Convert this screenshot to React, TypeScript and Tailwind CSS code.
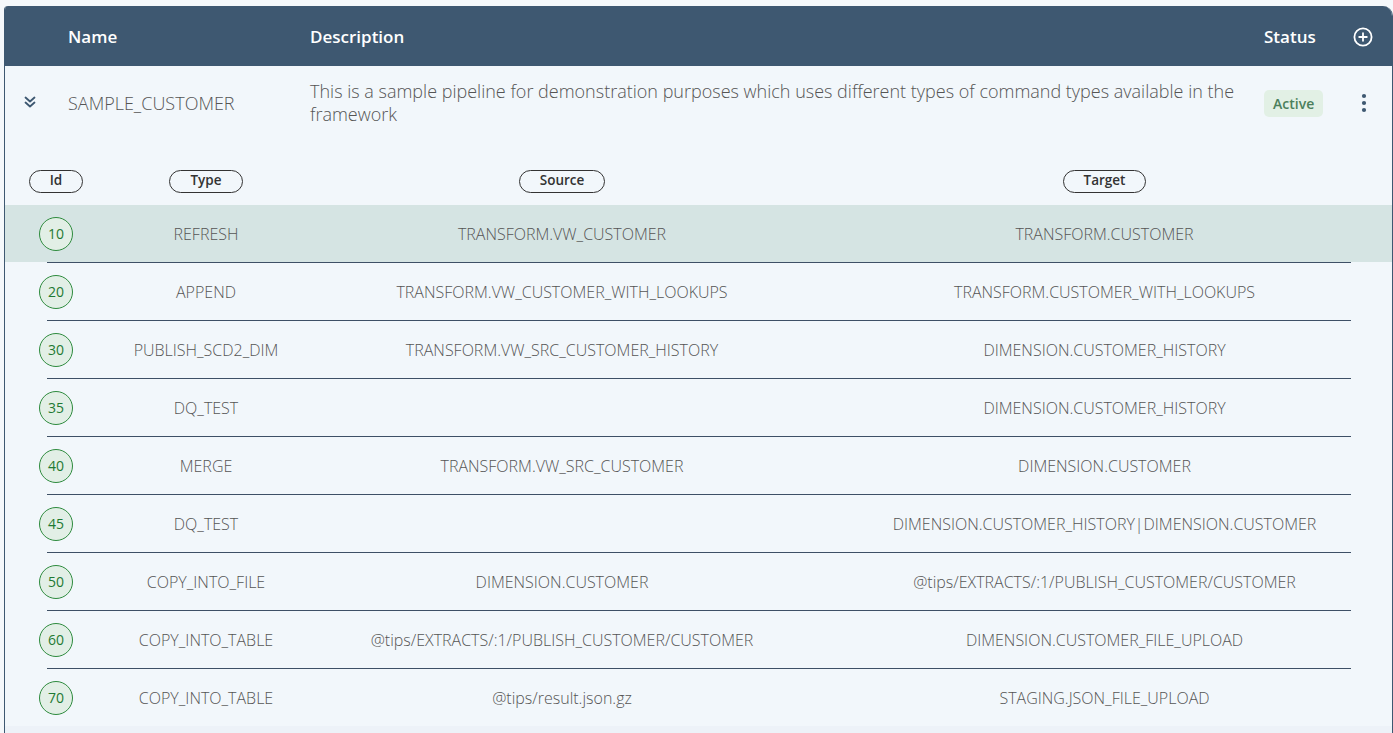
import React from "react";

const rows = [
  { id: "10", type: "REFRESH", source: "TRANSFORM.VW_CUSTOMER", target: "TRANSFORM.CUSTOMER" },
  { id: "20", type: "APPEND", source: "TRANSFORM.VW_CUSTOMER_WITH_LOOKUPS", target: "TRANSFORM.CUSTOMER_WITH_LOOKUPS" },
  { id: "30", type: "PUBLISH_SCD2_DIM", source: "TRANSFORM.VW_SRC_CUSTOMER_HISTORY", target: "DIMENSION.CUSTOMER_HISTORY" },
  { id: "35", type: "DQ_TEST", source: "", target: "DIMENSION.CUSTOMER_HISTORY" },
  { id: "40", type: "MERGE", source: "TRANSFORM.VW_SRC_CUSTOMER", target: "DIMENSION.CUSTOMER" },
  { id: "45", type: "DQ_TEST", source: "", target: "DIMENSION.CUSTOMER_HISTORY|DIMENSION.CUSTOMER" },
  { id: "50", type: "COPY_INTO_FILE", source: "DIMENSION.CUSTOMER", target: "@tips/EXTRACTS/:1/PUBLISH_CUSTOMER/CUSTOMER" },
  { id: "60", type: "COPY_INTO_TABLE", source: "@tips/EXTRACTS/:1/PUBLISH_CUSTOMER/CUSTOMER", target: "DIMENSION.CUSTOMER_FILE_UPLOAD" },
  { id: "70", type: "COPY_INTO_TABLE", source: "@tips/result.json.gz", target: "STAGING.JSON_FILE_UPLOAD" },
];

function Pill({ label }: { label: string }) {
  return (
    <span className="inline-flex h-[23px] items-center justify-center rounded-full border border-[#333] px-[20px] text-[13.5px] font-semibold leading-none text-[#333]">
      {label}
    </span>
  );
}

export default function App() {
  return (
    <div
      className="min-h-screen bg-[#f5f8fb] pt-[6px] pl-[4px]"
      style={{ fontFamily: '"Open Sans", "Noto Sans", sans-serif' }}
    >
      <div className="w-[1389px] overflow-hidden rounded-tl-[4px] rounded-tr-[10px] border-r border-l border-[#3e5871] bg-[#f2f7fb]">
        {/* Header */}
        <div className="grid h-[60px] grid-cols-[63px_242px_954px_1fr] items-center bg-[#3e5871] pt-[2px] text-[17px] font-semibold text-white">
          <div />
          <div>Name</div>
          <div>Description</div>
          <div className="flex items-center justify-between pr-[19px]">
            <span>Status</span>
            <svg width="20" height="20" viewBox="0 0 20 20" fill="none" stroke="white" strokeWidth="1.8" strokeLinecap="round">
              <circle cx="10" cy="10" r="8.6" />
              <path d="M10 6.2v7.6M6.2 10h7.6" />
            </svg>
          </div>
        </div>

        {/* Pipeline row */}
        <div className="grid h-[84px] grid-cols-[63px_242px_954px_1fr] items-center pb-[10px] text-[18px] font-light text-[#555]">
          <div className="flex justify-start pb-[3px] pl-[19px]">
            <svg width="12" height="14" viewBox="0 0 12 14" fill="none" stroke="#3e5871" strokeWidth="1.8" strokeLinecap="round" strokeLinejoin="round">
              <path d="M1.5 2.5L6 6.5l4.5-4" />
              <path d="M1.5 7.5L6 11.5l4.5-4" />
            </svg>
          </div>
          <div>SAMPLE_CUSTOMER</div>
          <div className="pr-[14px] leading-[23px]">
            This is a sample pipeline for demonstration purposes which uses different types of command types available in the framework
          </div>
          <div className="flex items-center justify-between pr-[25px]">
            <span className="rounded-[5px] bg-[#e2f0e5] px-[9px] py-[3px] text-[14px] font-semibold text-[#4b7f5c]">
              Active
            </span>
            <svg width="6" height="20" viewBox="0 0 6 20" fill="#3e5871">
              <circle cx="3" cy="3" r="2.1" />
              <circle cx="3" cy="10" r="2.1" />
              <circle cx="3" cy="17" r="2.1" />
            </svg>
          </div>
        </div>

        {/* Sub header */}
        <div className="grid h-[55px] grid-cols-[102px_198px_514px_1fr] items-center pt-[7px]">
          <div className="flex justify-center"><Pill label="Id" /></div>
          <div className="flex justify-center"><Pill label="Type" /></div>
          <div className="flex justify-center"><Pill label="Source" /></div>
          <div className="flex justify-center pr-[2px]"><Pill label="Target" /></div>
        </div>

        {/* Rows */}
        <div>
          {rows.map((r, i) => (
            <div key={r.id}>
              {i > 0 && <div className="ml-[42px] mr-[41px] h-px bg-[#3e5066]" />}
              <div
                className={
                  "grid h-[57px] grid-cols-[102px_198px_514px_1fr] items-center text-[16px] font-light text-[#555] " +
                  (i === 0 ? "bg-[#d5e4e3]" : "")
                }
              >
                <div className="flex justify-center">
                  <span className="flex h-[34px] w-[34px] items-center justify-center rounded-full border border-[#2e8b3e] bg-[#e2efe6] text-[14px] font-normal text-[#1f7a33]">
                    {r.id}
                  </span>
                </div>
                <div className="text-center">{r.type}</div>
                <div className="text-center">{r.source}</div>
                <div className="pr-[2px] text-center">{r.target}</div>
              </div>
            </div>
          ))}
        </div>
        <div className="h-[10px] bg-[#edf2f8]" />
      </div>
    </div>
  );
}
